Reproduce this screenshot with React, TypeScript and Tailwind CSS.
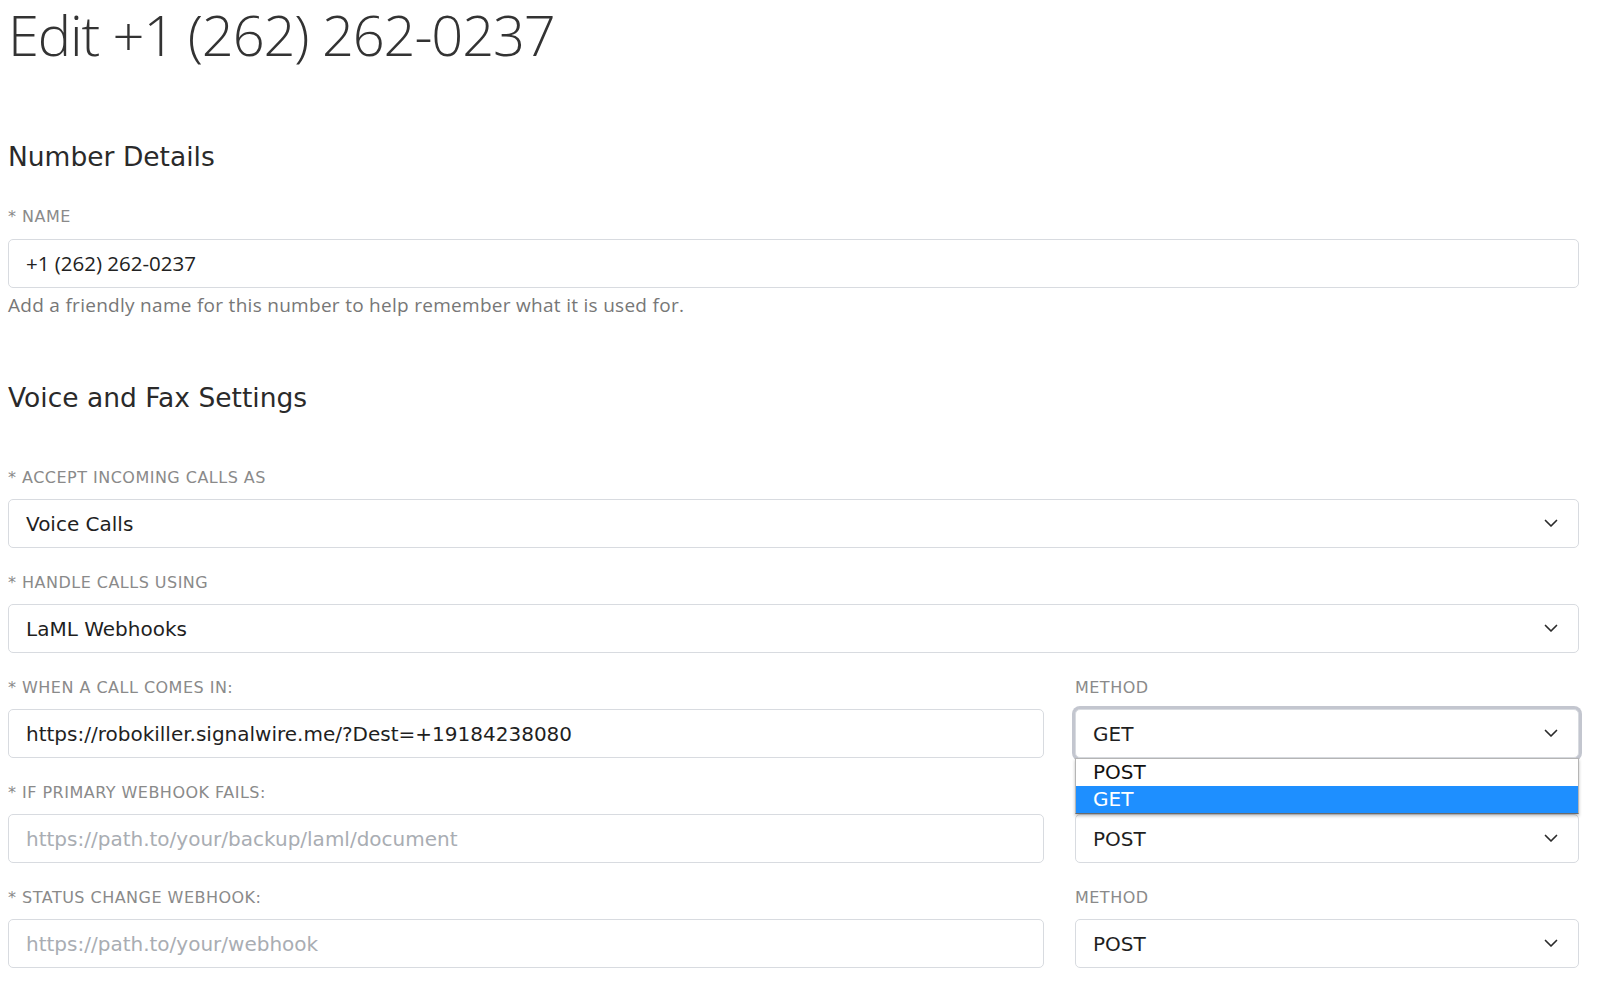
import type { ReactNode } from "react";

const mont = "font-['DejaVu_Sans','Liberation_Sans',sans-serif]";
const open = "font-['Open_Sans','Noto_Sans',sans-serif]";

function Chevron() {
  return (
    <svg width="14" height="9" viewBox="0 0 14 9" className="shrink-0">
      <polyline points="1.5,1.5 7,7 12.5,1.5" fill="none" stroke="#2b2b2b" strokeWidth="1.7" strokeLinecap="round" strokeLinejoin="round" />
    </svg>
  );
}

function Label({ children }: { children: ReactNode }) {
  return (
    <div className={`${mont} h-5 text-[16px] leading-5 uppercase text-[#8a8a8a] tracking-[0.03em]`}>{children}</div>
  );
}

function Box({ children, focused = false }: { children: ReactNode; focused?: boolean }) {
  return (
    <div
      className={`flex h-[49px] items-center justify-between rounded-[5px] border border-[#d8dbe0] bg-white pl-[17px] pr-5 ${
        focused ? "shadow-[0_0_0_3px_#c3c6cf]" : ""
      }`}
    >
      {children}
    </div>
  );
}

function Select({ value, focused }: { value: string; focused?: boolean }) {
  return (
    <Box focused={focused}>
      <span className={`${mont} text-[20px] text-[#1f1f1f]`}>{value}</span>
      <Chevron />
    </Box>
  );
}

function TextInput({ value, placeholder }: { value?: string; placeholder?: string }) {
  return (
    <Box>
      {value ? (
        <span className={`${mont} text-[20px] text-[#1f1f1f]`}>{value}</span>
      ) : (
        <span className={`${mont} text-[20px] text-[#a9adb3]`}>{placeholder}</span>
      )}
    </Box>
  );
}

function Field({ label, children }: { label: string; children: ReactNode }) {
  return (
    <div className="flex flex-col gap-[11.5px]">
      <Label>{label}</Label>
      {children}
    </div>
  );
}

export default function App() {
  return (
    <div className="min-h-[985px] bg-white pl-2 pr-[21px] text-[#333]">
      <h1 className={`${open} text-[56px] font-light leading-[68px] text-[#333] tracking-[-0.02em]`}>
        Edit +1 (262) 262-0237
      </h1>

      <h2 className={`${mont} mt-[71px] text-[26.5px] font-normal leading-9 text-[#2a2a2a]`}>Number Details</h2>

      <div className="mt-8 flex flex-col gap-[11.5px]">
        <Label>* Name</Label>
        <div>
          <div className="flex h-[49px] items-center rounded-[5px] border border-[#d8dbe0] bg-white pl-[17px]">
            <span className={`${open} text-[20.5px] text-[#222]`}>+1 (262) 262-0237</span>
          </div>
          <p className={`${open} mt-1 text-[19px] leading-[26px] tracking-[0.015em] text-[#777]`}>
            Add a friendly name for this number to help remember what it is used for.
          </p>
        </div>
      </div>

      <h2 className={`${mont} mt-[62px] text-[26.5px] font-normal leading-9 text-[#2a2a2a]`}>Voice and Fax Settings</h2>

      <div className="mt-[52px] flex flex-col gap-[24.5px]">
        <Field label="* Accept incoming calls as">
          <Select value="Voice Calls" />
        </Field>
        <Field label="* Handle calls using">
          <Select value="LaML Webhooks" />
        </Field>

        <div className="grid grid-cols-[1036px_1fr] gap-x-[31px] gap-y-[24.5px]">
          <Field label="* When a call comes in:">
            <TextInput value="https://robokiller.signalwire.me/?Dest=+19184238080" />
          </Field>
          <div className="relative z-10">
            <Field label="Method">
              <Select value="GET" focused />
            </Field>
            <div className="absolute left-0 right-0 top-full border border-[#b5b5b5] border-b-[#6b6b6b] bg-white shadow-[0_2px_3px_rgba(0,0,0,0.25)]">
              <div className={`${mont} h-[27px] pl-[17px] text-[20px] leading-[27px] text-[#111]`}>POST</div>
              <div className={`${mont} h-[27px] bg-[#1e8fff] pl-[17px] text-[20px] leading-[27px] text-white`}>GET</div>
            </div>
          </div>

          <Field label="* If primary webhook fails:">
            <TextInput placeholder="https://path.to/your/backup/laml/document" />
          </Field>
          <Field label="Method">
            <Select value="POST" />
          </Field>

          <Field label="* Status change webhook:">
            <TextInput placeholder="https://path.to/your/webhook" />
          </Field>
          <Field label="Method">
            <Select value="POST" />
          </Field>
        </div>
      </div>
    </div>
  );
}
